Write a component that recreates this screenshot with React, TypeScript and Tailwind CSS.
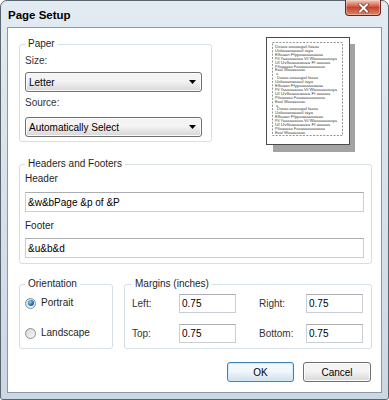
import React from 'react';

const block: [string, number][] = [
  ['Dvaaa aoaaagail faaaa', 44],
  ['Uolaaaoaaaail iaya', 38],
  ['Elfaaan Ffyyaaaaaaaaaa', 48],
  ['Pil Yaaaaaaaaa Vil Wlaaaaaaiaaya', 62],
  ['Ul Uvllaaaaaaaa Fl aaaaa', 55],
  ['Pilaaaaaa Faaaaaaaaaaaaa', 50],
  ['Eaal Waaaaaaaa', 30],
];

const Preview: React.FC = () => {
  const lines: { t: string; w: number; x: number }[] = [];
  for (let b = 0; b < 3; b++) {
    block.forEach(([t, w], i) => lines.push({ t, w: i === 0 && b > 0 ? w - 3 : w, x: i === 0 && b > 0 ? 10 : 8 }));
    if (b < 2) lines.push({ t: 'a', w: 2, x: 9 });
  }
  return (
    <div className="relative ml-[54px] h-[115px] w-[89px] shrink-0">
      <div className="absolute left-[7px] top-[7px] h-[108px] w-[82px] bg-[#a3a3a3]" />
      <div className="relative h-[108px] w-[84px] border border-[#4a4a4a] bg-white">
        <svg width="82" height="106" viewBox="0 0 82 106">
          <rect x="5.5" y="4.5" width="70" height="93" fill="none" stroke="#777" strokeWidth="0.8" strokeDasharray="2 1.4" />
          {lines.map((l, i) => (
            <text
              key={i}
              x={l.x}
              y={10 + i * 3.9}
              fontSize="3.4"
              fill="#444"
              fontFamily="Liberation Sans, Arial, sans-serif"
              textLength={l.w}
              lengthAdjust="spacingAndGlyphs"
            >
              {l.t}
            </text>
          ))}
        </svg>
      </div>
    </div>
  );
};

const Select: React.FC<{ value: string; className?: string }> = ({ value, className }) => (
  <div
    className={`flex h-[20px] w-[177px] items-center justify-between rounded-[3px] border border-[#707070] bg-linear-to-b from-[#f4f4f4] from-45% to-[#d6d6d6] pl-[3px] pr-[5px] text-[10px] text-black shadow-[inset_0_0_0_1px_#fbfbfb] ${className ?? ''}`}
  >
    <span>{value}</span>
    <svg width="7" height="4" viewBox="0 0 7 4">
      <path d="M0 0h7L3.5 4z" fill="#000" />
    </svg>
  </div>
);

const TextBox: React.FC<{ value: string; className?: string }> = ({ value, className }) => (
  <input
    readOnly
    value={value}
    className={`border border-[#c9ced6] border-t-[#abadb3] bg-white px-[2px] text-[10px] text-black outline-none ${className ?? ''}`}
  />
);

const Legend: React.FC<{ children: React.ReactNode }> = ({ children }) => (
  <legend className="px-[3px] text-[10px] leading-[12px] text-[#1e1e1e]">{children}</legend>
);

const Radio: React.FC<{ checked?: boolean; label: string; className?: string }> = ({ checked, label, className }) => (
  <div className={`flex items-center ${className ?? ''}`}>
    <span className="flex h-[11px] w-[11px] items-center justify-center rounded-full border border-[#8e8f8f] bg-linear-to-br from-[#d4d4d4] to-[#fafafa]">
      {checked && (
        <span className="h-[6px] w-[6px] rounded-full bg-radial-[at_35%_35%] from-[#8fd4f5] via-[#1f78c0] to-[#0d4f8a]" />
      )}
    </span>
    <span className="ml-[5px] text-[10px] leading-[12px] text-[#1e1e1e]">{label}</span>
  </div>
);

const App: React.FC = () => {
  return (
    <div className="h-[400px] w-[389px] bg-white font-['Liberation_Sans',Arial,sans-serif]">
      <div className="flex h-full w-full flex-col rounded-t-[7px] rounded-b-[3px] border border-[#5b656e] bg-linear-to-b from-[#e3ebf2] via-[#d6e1eb] to-[#cbd8e4] px-[6px] pb-[6px]">
        {/* title bar */}
        <div className="flex h-[26px] items-start justify-between">
          <span className="ml-[1px] pt-[7px] text-[11.5px] font-bold leading-[14px] text-black">Page Setup</span>
          <div className="-mt-[1px] mr-[1px] flex h-[16px] w-[36px] items-center justify-center rounded-b-[4px] border border-t-0 border-[#6e2418] bg-linear-to-b from-[#eab2a4] from-10% via-[#c6442b] via-50% to-[#d98468] shadow-[inset_0_0_0_1px_rgba(255,255,255,0.35)]">
            <svg width="11" height="10" viewBox="0 0 11 10">
              <path d="M2 1.5l7 7M9 1.5l-7 7" stroke="#6b2a20" strokeWidth="3.2" strokeLinecap="square" />
              <path d="M2 1.5l7 7M9 1.5l-7 7" stroke="#fff" strokeWidth="2" strokeLinecap="square" />
            </svg>
          </div>
        </div>

        {/* client area */}
        <div className="flex flex-1 flex-col border border-[#8a98a8] bg-white pl-[11px] pt-[9px]">
          <div className="flex items-start">
            <fieldset className="mt-[1px] flex w-[193px] flex-col rounded-[3px] border border-[#d5dfe5] pb-[4px] pl-[5px]">
              <Legend>Paper</Legend>
              <span className="mt-[5px] text-[10px] leading-[12px] text-[#333]">Size:</span>
              <Select value="Letter" className="mt-[5px]" />
              <span className="mt-[5px] text-[10px] leading-[12px] text-[#333]">Source:</span>
              <Select value="Automatically Select" className="mt-[8px]" />
            </fieldset>
            <Preview />
          </div>

          <fieldset className="mt-[6px] flex w-[353px] flex-col rounded-[3px] border border-[#d5dfe5] pb-[5px] pl-[5px]">
            <Legend>Headers and Footers</Legend>
            <span className="mt-[3px] text-[10px] leading-[12px] text-[#1e1e1e]">Header</span>
            <TextBox value="&w&bPage &p of &P" className="mt-[7px] h-[20px] w-[339px]" />
            <span className="mt-[8px] text-[10px] leading-[12px] text-[#1e1e1e]">Footer</span>
            <TextBox value="&u&b&d" className="mt-[6px] h-[20px] w-[339px]" />
          </fieldset>

          <div className="mt-[14px] flex items-start gap-[11px]">
            <fieldset className="flex h-[71px] w-[94px] flex-col rounded-[3px] border border-[#d5dfe5] pl-[5px]">
              <Legend>Orientation</Legend>
              <Radio checked label="Portrait" className="mt-[7px]" />
              <Radio label="Landscape" className="mt-[18px]" />
            </fieldset>
            <fieldset className="flex h-[71px] w-[248px] flex-col rounded-[3px] border border-[#d5dfe5] pl-[7px]">
              <Legend>Margins (inches)</Legend>
              <div className="mt-[4px] flex items-center">
                <span className="w-[47px] text-[10px] text-[#333]">Left:</span>
                <TextBox value="0.75" className="h-[19px] w-[57px]" />
                <span className="ml-[23px] w-[47px] text-[10px] text-[#333]">Right:</span>
                <TextBox value="0.75" className="h-[19px] w-[57px]" />
              </div>
              <div className="mt-[11px] flex items-center">
                <span className="w-[47px] text-[10px] text-[#333]">Top:</span>
                <TextBox value="0.75" className="h-[19px] w-[57px]" />
                <span className="ml-[23px] w-[47px] text-[10px] text-[#333]">Bottom:</span>
                <TextBox value="0.75" className="h-[19px] w-[57px]" />
              </div>
            </fieldset>
          </div>

          <div className="mt-[13px] flex w-[352px] justify-end gap-[9px]">
            <button className="h-[20px] w-[67px] rounded-[3px] border border-[#3c7fb1] bg-linear-to-b from-[#f2f8fc] from-45% to-[#d0dde8] text-[10px] text-black shadow-[inset_0_0_0_1px_#cfeefc]">
              OK
            </button>
            <button className="h-[20px] w-[68px] rounded-[3px] border border-[#707070] bg-linear-to-b from-[#f4f4f4] from-45% to-[#d8d8d8] text-[10px] text-black shadow-[inset_0_0_0_1px_#fcfcfc]">
              Cancel
            </button>
          </div>
        </div>
      </div>
    </div>
  );
};

export default App;
